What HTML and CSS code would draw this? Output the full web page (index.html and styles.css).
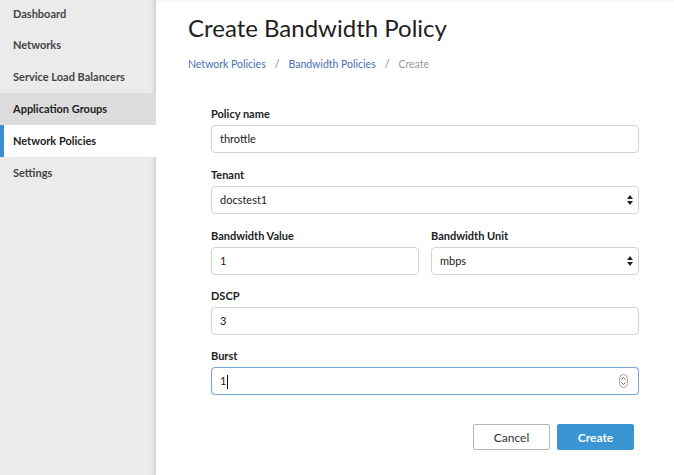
FILE: index.html
```html
<!DOCTYPE html>
<html>
<head>
<meta charset="utf-8">
<link rel="stylesheet" href="styles.css">
</head>
<body>
<div class="app">
  <nav class="sidebar">
    <div class="nav-item">Dashboard</div>
    <div class="nav-item">Networks</div>
    <div class="nav-item">Service Load Balancers</div>
    <div class="nav-item hover">Application Groups</div>
    <div class="nav-item active">Network Policies</div>
    <div class="nav-item">Settings</div>
  </nav>
  <main class="main">
    <h1 class="title">Create Bandwidth Policy</h1>
    <div class="breadcrumb">
      <a class="crumb-link">Network Policies</a>
      <span class="sep">/</span>
      <a class="crumb-link">Bandwidth Policies</a>
      <span class="sep">/</span>
      <span class="crumb-current">Create</span>
    </div>
    <form class="form">
      <div class="group">
        <div class="label">Policy name</div>
        <div class="field">throttle</div>
      </div>
      <div class="group">
        <div class="label">Tenant</div>
        <div class="field select">docstest1
          <svg class="arrows" width="6" height="10" viewBox="0 0 6 10"><path d="M3 0 L6 4 L0 4 Z M0 6 L6 6 L3 10 Z" fill="#222"/></svg>
        </div>
      </div>
      <div class="row">
        <div class="group tight">
          <div class="label">Bandwidth Value</div>
          <div class="field">1</div>
        </div>
        <div class="group tight">
          <div class="label">Bandwidth Unit</div>
          <div class="field select">mbps
            <svg class="arrows" width="6" height="10" viewBox="0 0 6 10"><path d="M3 0 L6 4 L0 4 Z M0 6 L6 6 L3 10 Z" fill="#222"/></svg>
          </div>
        </div>
      </div>
      <div class="group tight">
        <div class="label">DSCP</div>
        <div class="field">3</div>
      </div>
      <div class="group">
        <div class="label">Burst</div>
        <div class="field focus"><span>1</span><span class="caret"></span>
          <svg class="spinner" width="9" height="14" viewBox="0 0 9 14"><rect x="0.5" y="0.5" width="8" height="13" rx="4" fill="#fff" stroke="#aaa"/><path d="M2.5 5.5 L4.5 3.5 L6.5 5.5 M2.5 8.5 L4.5 10.5 L6.5 8.5" fill="none" stroke="#555" stroke-width="0.9"/></svg>
        </div>
      </div>
      <div class="actions">
        <button type="button" class="btn cancel">Cancel</button>
        <button type="button" class="btn create">Create</button>
      </div>
    </form>
  </main>
</div>
</body>
</html>
```
FILE: styles.css
```css
html, body {
  margin: 0;
  padding: 0;
  height: 100%;
  background: #fff;
  font-family: Lato, "Open Sans", sans-serif;
  color: #333;
}
.app {
  display: flex;
  height: 475px;
  overflow: hidden;
}
.sidebar {
  width: 156px;
  flex: none;
  background: #ebebeb;
  box-shadow: inset -5px 0 4px -3px rgba(0,0,0,0.13);
  margin-top: -2px;
}
.nav-item {
  height: 32px;
  line-height: 32px;
  padding-left: 13px;
  font-size: 11px;
  font-weight: 700;
  color: #444;
  white-space: nowrap;
}
.nav-item:first-child {
  height: 31px;
}
.nav-item.hover {
  background: #dcdcdc;
  color: #222;
}
.nav-item.active {
  background: #fff;
  color: #222;
  box-shadow: inset 4px 0 0 #3b8fd0;
}
.main {
  flex: 1;
  padding-left: 32px;
  box-shadow: inset 0 3px 3px -2px rgba(0,0,0,0.06);
}
.title {
  margin: 13px 0 0;
  font-size: 24px;
  line-height: 30px;
  font-weight: 400;
  color: #1e1e1e;
}
.breadcrumb {
  margin-top: 13px;
  font-size: 10.5px;
  line-height: 16px;
  display: flex;
  gap: 9px;
}
.crumb-link {
  color: #4670b4;
}
.sep {
  color: #777;
}
.crumb-current {
  color: #999;
}
.form {
  margin-top: 34px;
  margin-left: 23px;
  width: 428px;
}
.group {
  margin-bottom: 14px;
  min-width: 0;
}
.group.tight {
  margin-bottom: 13px;
}
.row {
  display: grid;
  grid-template-columns: 1fr 1fr;
  column-gap: 12px;
}
.label {
  font-size: 11px;
  line-height: 16px;
  font-weight: 700;
  color: #222;
  margin-bottom: 3px;
}
.field {
  position: relative;
  box-sizing: border-box;
  height: 28px;
  border: 1px solid #d4d4d4;
  border-radius: 4px;
  padding: 0 8px;
  font-size: 11px;
  line-height: 26px;
  color: #222;
  background: #fff;
}
.field.focus {
  border-color: #7aa7d6;
  box-shadow: 0 0 1px rgba(102,150,210,0.5);
}
.caret {
  display: inline-block;
  width: 1px;
  height: 14px;
  background: #111;
  vertical-align: middle;
  margin-left: 1px;
}
.arrows {
  position: absolute;
  right: 5px;
  top: 8px;
}
.spinner {
  position: absolute;
  right: 10px;
  top: 6px;
}
.actions {
  display: flex;
  justify-content: flex-end;
  gap: 7px;
  margin-top: 29px;
  margin-right: 5px;
}
.btn {
  width: 77px;
  height: 26px;
  font-family: Lato, "Open Sans", sans-serif;
  font-size: 12px;
  border-radius: 2px;
  padding: 0;
  cursor: pointer;
}
.btn.cancel {
  background: #fff;
  border: 1px solid #b5b5b5;
  color: #333;
}
.btn.create {
  background: #3a96d3;
  border: 1px solid #3a96d3;
  color: #fff;
  font-weight: 700;
}
```
